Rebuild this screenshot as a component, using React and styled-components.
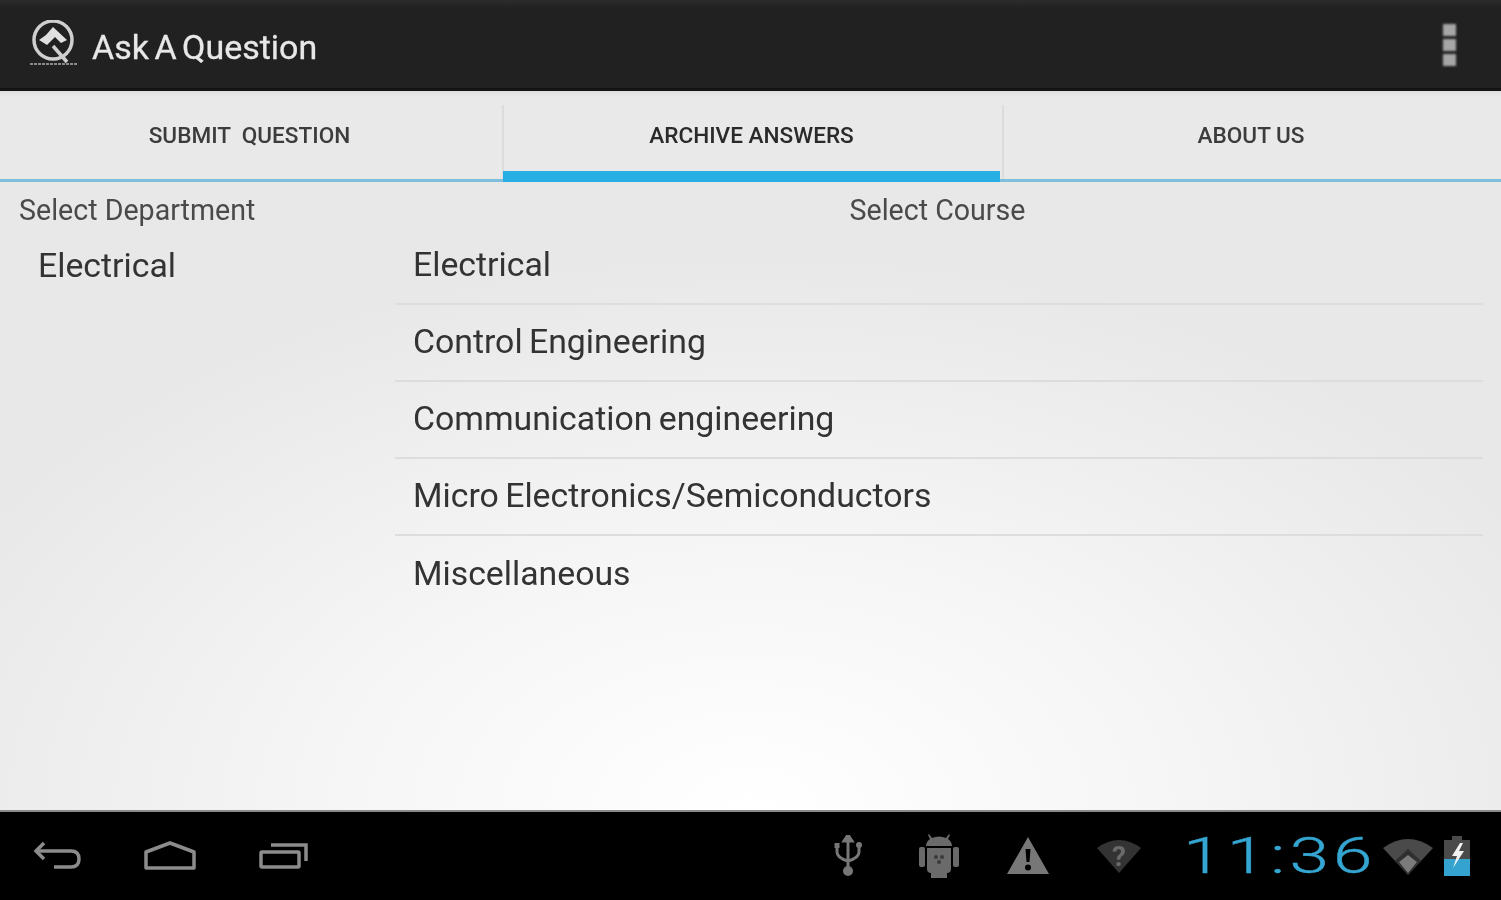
import { createGlobalStyle } from 'styled-components'
import styled from 'styled-components'

const GlobalStyle = createGlobalStyle`
  html, body { margin: 0; padding: 0; height: 100%; background: #000; }
  #root { height: 100%; }
`

const Screen = styled.div`
  width: 1501px;
  height: 900px;
  display: flex;
  flex-direction: column;
  overflow: hidden;
  font-family: Roboto, "Liberation Sans", sans-serif;
`

const ActionBar = styled.header`
  height: 88px;
  flex: none;
  display: flex;
  align-items: center;
  padding: 0 45px 0 28px;
  background: linear-gradient(#2c2c2c 0, #212121 8px, #212121 100%);
  border-bottom: 3px solid #141414;
  box-sizing: content-box;
`

const Title = styled.h1`
  margin: 5px 0 0 12px;
  flex: 1;
  font-size: 34px;
  font-weight: 400;
  word-spacing: -3px;
  color: #e8e8e8;
  -webkit-text-stroke: 0.3px #e8e8e8;
  filter: blur(0.6px);
`

const Dots = styled.div`
  display: flex;
  flex-direction: column;
  gap: 3px;
  margin-top: 2px;
`

const Dot = styled.span`
  width: 13px;
  height: 12px;
  background: #a6a6a6;
  filter: blur(0.8px);
`

const Body = styled.main`
  flex: 1;
  display: flex;
  flex-direction: column;
  background: radial-gradient(ellipse 900px 560px at 50% 100%, #ffffff 0%, #f6f6f6 45%, #e8e8e8 100%);
`

const Tabs = styled.nav`
  height: 91px;
  flex: none;
  display: grid;
  grid-template-columns: 502px 500px 1fr;
  background: linear-gradient(#dedede 0, #e9e9e9 6px, #e9e9e9 100%);
  box-sizing: border-box;
  border-bottom: 3px solid #7fbfdb;
`

const Tab = styled.div`
  position: relative;
  display: flex;
  align-items: center;
  justify-content: center;
  padding: 0 3px 14px 0;
  margin-top: 14px;
  font-size: 22.6px;
  font-weight: 500;
  white-space: pre;
  color: ${p => (p.$active ? '#2a2a2a' : '#3c3c3c')};
  border-left: ${p => (p.$divider ? '2px solid #dcdcdc' : 'none')};

  & > span {
    filter: blur(0.6px);
  }

  &::after {
    content: '';
    display: ${p => (p.$active ? 'block' : 'none')};
    position: absolute;
    left: -1px;
    right: 2px;
    bottom: -3px;
    height: 11px;
    background: #27aee3;
  }
`

const Columns = styled.div`
  flex: 1;
  display: flex;
  padding-right: 18px;
`

const DepartmentColumn = styled.section`
  width: 395px;
  flex: none;
`

const CourseColumn = styled.section`
  flex: 1;
`

const ColumnLabel = styled.div`
  height: 46px;
  line-height: 56px;
  font-size: 28.6px;
  color: #4a4a4a;
  text-align: ${p => p.$align || 'left'};
  padding-left: ${p => (p.$align ? '0' : '19px')};
  padding-right: ${p => (p.$align ? '3px' : '0')};
  filter: blur(0.6px);
`

const ListRow = styled.div`
  height: 77px;
  box-sizing: border-box;
  display: flex;
  align-items: center;
  padding: 0 0 3px ${p => (p.$indent ? '38px' : '18px')};
  border-bottom: ${p => (p.$line ? '2px solid #dddddd' : 'none')};
  font-size: 33.8px;
  word-spacing: -2px;
  color: #333;

  & > span {
    filter: blur(0.6px);
  }
`

const SystemBar = styled.footer`
  height: 90px;
  flex: none;
  display: flex;
  align-items: center;
  background: #000;
  box-sizing: border-box;
  border-top: 2px solid #8a8a8a;
  padding: 0 31px 0 33px;
`

const NavButtons = styled.div`
  display: flex;
  align-items: center;
  gap: 63px;
  flex: 1;
`

const StatusIcons = styled.div`
  display: flex;
  align-items: center;
  gap: 48px;
  margin-right: 42px;
`

const Clock = styled.div`
  font-weight: 300;
  font-size: 50px;
  line-height: 56px;
  letter-spacing: 3px;
  width: 200px;
  white-space: nowrap;
  color: #35a6d2;
  -webkit-text-stroke: 0.4px #35a6d2;
  transform: scaleX(1.42);
  transform-origin: left center;
  filter: blur(0.5px);
`

const Tray = styled.div`
  display: flex;
  align-items: center;
  gap: 11px;
`

const Icon = styled.svg`
  display: block;
  filter: blur(0.7px);
`

const BackIcon = () => (
  <Icon width="48" height="30" viewBox="0 0 48 30" fill="none" stroke="#8c8c8c" strokeWidth="3.5">
    <path d="M11 2 L3 10 L11 18" />
    <path d="M3 10 H38 Q46 10 46 18 Q46 26 38 26 H21" />
  </Icon>
)

const HomeIcon = () => (
  <Icon width="52" height="30" viewBox="0 0 52 30" fill="none" stroke="#8c8c8c" strokeWidth="3.5" strokeLinejoin="round">
    <path d="M2 11 L26 2 L50 11 V27 H2 Z" />
  </Icon>
)

const RecentIcon = () => (
  <Icon width="49" height="28" viewBox="0 0 49 28" fill="none" stroke="#8c8c8c" strokeWidth="3.5">
    <rect x="2" y="10" width="38" height="15" rx="1" />
    <path d="M12 3 H47 V19" />
  </Icon>
)

const UsbIcon = () => (
  <Icon width="38" height="42" viewBox="0 0 38 42" fill="none" stroke="#777" strokeWidth="3">
    <path d="M15 2 V34" />
    <path d="M15 0 L11 6 H19 Z" fill="#777" />
    <path d="M4 12 V17 Q4 23 15 26 Q26 23 26 17 V12" />
    <rect x="1.5" y="8" width="5" height="5" fill="#777" stroke="none" />
    <circle cx="26" cy="10" r="3" fill="#777" stroke="none" />
    <circle cx="15" cy="36" r="5" fill="#777" stroke="none" />
  </Icon>
)

const AndroidIcon = () => (
  <Icon width="40" height="46" viewBox="0 0 40 46" fill="#6a6a6a">
    <path d="M10 1 L13 5 Q20 2 27 5 L30 1 L31 2 L29 6 Q33 9 33 13 H7 Q7 9 11 6 L9 2 Z" />
    <rect x="0" y="14" width="6" height="20" rx="2" />
    <rect x="34" y="14" width="6" height="20" rx="2" />
    <path d="M8 15 H32 V36 Q32 40 28 40 V45 H12 V40 Q8 40 8 36 Z" />
    <circle cx="17" cy="24" r="2" fill="#3a3a3a" />
    <circle cx="23" cy="24" r="2" fill="#3a3a3a" />
    <circle cx="20" cy="29" r="2" fill="#3a3a3a" />
  </Icon>
)

const WarningIcon = () => (
  <Icon width="42" height="38" viewBox="0 0 42 38" fill="#777">
    <path fillRule="evenodd" d="M21 0 L42 37 H0 Z M18.5 12 L19.5 25 H22.5 L23.5 12 Z M21 27.5 A3 3 0 1 0 21 33.5 A3 3 0 1 0 21 27.5 Z" />
  </Icon>
)

const WifiUnknownIcon = () => (
  <Icon width="44" height="36" viewBox="0 0 44 36" fill="none">
    <path d="M0 10 Q22 -6 44 10 L22 35 Z" fill="#333" />
    <text x="22" y="28" textAnchor="middle" fontFamily="Roboto, sans-serif" fontWeight="700" fontSize="28" fill="#6a6a6a">?</text>
  </Icon>
)

const WifiIcon = () => (
  <Icon width="50" height="38" viewBox="0 0 50 38">
    <path d="M0 11 Q25 -7 50 11 L25 38 Z" fill="#4a4a4a" />
    <path d="M12 24 L25 12 L38 24 L25 38 Z" fill="#2f2f2f" />
    <path d="M16 25 L25 18 L34 25 L25 36 Z" fill="#7a7a7a" />
  </Icon>
)

const BatteryIcon = () => (
  <Icon width="26" height="40" viewBox="0 0 26 40">
    <rect x="8" y="0" width="10" height="4" fill="#4a4a4a" />
    <rect x="0" y="4" width="26" height="36" fill="#4a4a4a" />
    <rect x="0" y="23" width="26" height="17" fill="#34a3cf" />
    <path d="M16 7 L8 20 H13 L9 32 L20 15 H15 L19 7 Z" fill="#f2f2f2" />
  </Icon>
)

const AppLogo = () => (
  <Icon width="52" height="48" viewBox="0 0 52 48" fill="none" stroke="#cfcfcf">
    <circle cx="25" cy="20" r="19" strokeWidth="3.5" />
    <path d="M11 20 L18 15 L25 7 L39 20 L33 23 L27 17 L19 25 Z" fill="#e0e0e0" stroke="none" />
    <path d="M25 26 L39 42" strokeWidth="3.5" />
    <path d="M2 44 H50" strokeWidth="2" stroke="#8a8a8a" strokeDasharray="3 1" />
  </Icon>
)

const courses = [
  'Electrical',
  'Control Engineering',
  'Communication engineering',
  'Micro Electronics/Semiconductors',
  'Miscellaneous',
]

export default function App() {
  return (
    <>
      <GlobalStyle />
      <Screen>
        <ActionBar>
          <AppLogo />
          <Title>Ask A Question</Title>
          <Dots>
            <Dot />
            <Dot />
            <Dot />
          </Dots>
        </ActionBar>
        <Body>
          <Tabs>
            <Tab><span>{'SUBMIT  QUESTION'}</span></Tab>
            <Tab $active $divider><span>ARCHIVE ANSWERS</span></Tab>
            <Tab $divider><span>ABOUT US</span></Tab>
          </Tabs>
          <Columns>
            <DepartmentColumn>
              <ColumnLabel>Select Department</ColumnLabel>
              <ListRow $indent><span>Electrical</span></ListRow>
            </DepartmentColumn>
            <CourseColumn>
              <ColumnLabel $align="center">Select Course</ColumnLabel>
              {courses.map((name, i) => (
                <ListRow key={name} $line={i < courses.length - 1}>
                  <span>{name}</span>
                </ListRow>
              ))}
            </CourseColumn>
          </Columns>
        </Body>
        <SystemBar>
          <NavButtons>
            <BackIcon />
            <HomeIcon />
            <RecentIcon />
          </NavButtons>
          <StatusIcons>
            <UsbIcon />
            <AndroidIcon />
            <WarningIcon />
            <WifiUnknownIcon />
          </StatusIcons>
          <Clock>11:36</Clock>
          <Tray>
            <WifiIcon />
            <BatteryIcon />
          </Tray>
        </SystemBar>
      </Screen>
    </>
  )
}
